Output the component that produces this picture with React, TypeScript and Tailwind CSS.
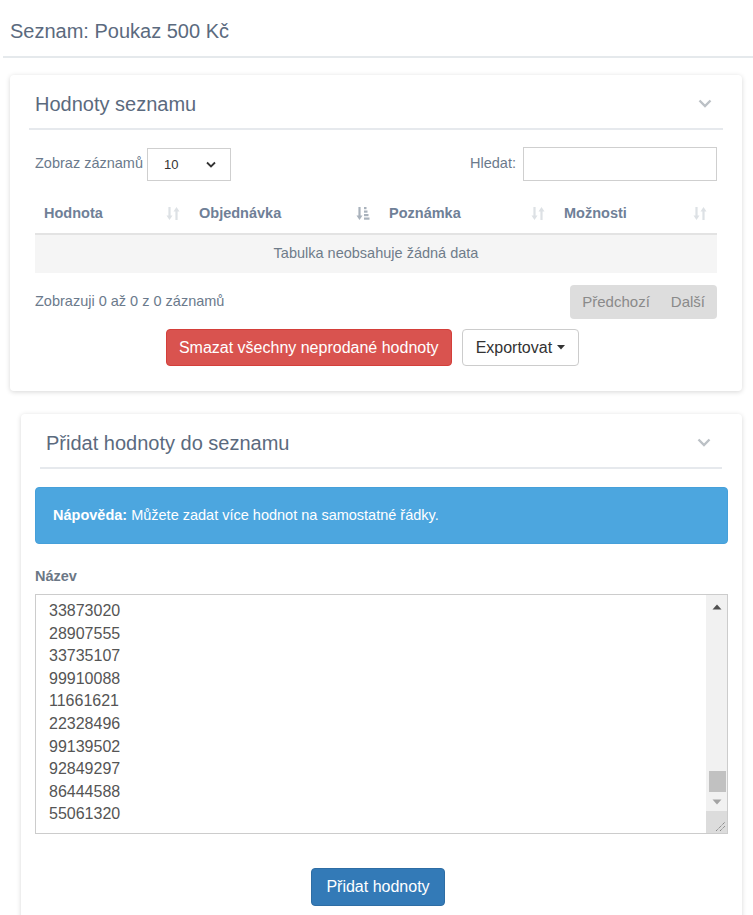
import React from "react";

const values = [
  "33873020",
  "28907555",
  "33735107",
  "99910088",
  "11661621",
  "22328496",
  "99139502",
  "92849297",
  "86444588",
  "55061320",
];

function Chevron() {
  return (
    <svg width="14" height="9" viewBox="0 0 14 9" className="mr-[11px]">
      <polyline points="1.5,1.5 7,7 12.5,1.5" fill="none" stroke="#bcc1c6" strokeWidth="2.4" />
    </svg>
  );
}

function SortIcon({ active = false }: { active?: boolean }) {
  const c = active ? "#a9b2bc" : "#dde1e5";
  return (
    <svg width="14" height="15" viewBox="0 0 14 15">
      <line x1="3.5" y1="1" x2="3.5" y2="12" stroke={c} strokeWidth="2.2" />
      <polygon points="0.5,9.5 6.5,9.5 3.5,14" fill={c} />
      {active ? (
        <>
          <rect x="8" y="1" width="2.5" height="2.2" fill={c} />
          <rect x="8" y="4.5" width="3.5" height="2.2" fill={c} />
          <rect x="8" y="8" width="4.5" height="2.2" fill={c} />
          <rect x="8" y="11.5" width="5.5" height="2.2" fill={c} />
        </>
      ) : (
        <>
          <line x1="10.5" y1="14" x2="10.5" y2="3" stroke={c} strokeWidth="2.2" />
          <polygon points="7.5,5.5 13.5,5.5 10.5,1" fill={c} />
        </>
      )}
    </svg>
  );
}

function CardHeader({ title }: { title: string }) {
  return (
    <div className="flex h-[55px] items-center justify-between border-b-2 border-[#e6e9ed] pt-[4px] pl-[6px]">
      <h2 className="text-[20px] leading-[28px] text-[#5b6a7e]">{title}</h2>
      <Chevron />
    </div>
  );
}

const columns = [
  { name: "Hodnota", w: "w-[155px]", active: false },
  { name: "Objednávka", w: "w-[190px]", active: true },
  { name: "Poznámka", w: "w-[175px]", active: false },
  { name: "Možnosti", w: "w-[162px]", active: false },
];

export default function App() {
  return (
    <div className="min-h-[915px] bg-white font-['Liberation_Sans',Arial,sans-serif] text-[14.5px] text-[#6b7a8c]">
      <div className="ml-[3px] flex h-[58px] items-center border-b-2 border-[#e5e9ec] pl-[7px] pt-[6px]">
        <h1 className="text-[20px] leading-[28px] text-[#5b6a7e]">Seznam: Poukaz 500 Kč</h1>
      </div>

      {/* Hodnoty seznamu */}
      <div className="ml-[10px] mt-[17px] w-[732px] rounded-[4px] bg-white pb-[25px] shadow-[0_1px_5px_rgba(0,0,0,0.16)]">
        <div className="px-[19px]">
          <CardHeader title="Hodnoty seznamu" />
        </div>
        <div className="px-[25px]">
          <div className="mt-[16px] flex items-center justify-between">
            <div className="flex items-center">
              <span>Zobraz záznamů</span>
              <div className="ml-[4px] mt-[2px] flex h-[33px] w-[84px] items-center justify-between border border-[#cfcfcf] pl-[16px] pr-[14px] text-[13px] text-[#333]">
                <span>10</span>
                <svg width="10" height="7" viewBox="0 0 10 7">
                  <polyline points="1,1.5 5,5.5 9,1.5" fill="none" stroke="#333" strokeWidth="1.8" />
                </svg>
              </div>
            </div>
            <div className="flex items-center">
              <span>Hledat:</span>
              <div className="ml-[7px] h-[34px] w-[194px] border border-[#cfcfcf]" />
            </div>
          </div>

          <div className="mt-[14px]">
            <div className="flex h-[40px] items-start border-b-2 border-[#e3e3e3] pt-[8px]">
              {columns.map((c) => (
                <div key={c.name} className={`${c.w} flex items-center justify-between pl-[9px] pr-[10px]`}>
                  <span className="font-bold text-[#6f8097]">{c.name}</span>
                  <SortIcon active={c.active} />
                </div>
              ))}
            </div>
            <div className="flex h-[38px] items-center justify-center bg-[#f5f5f5] text-[#6f7c8a]">
              Tabulka neobsahuje žádná data
            </div>
          </div>

          <div className="mt-[12px] flex items-start justify-between">
            <span className="mt-[6px]">Zobrazuji 0 až 0 z 0 záznamů</span>
            <div className="flex h-[34px] items-center rounded-[4px] bg-[#dddddd] text-[15px] text-[#8a8a8a]">
              <span className="pl-[12px] pr-[10px]">Předchozí</span>
              <span className="pl-[11px] pr-[12px]">Další</span>
            </div>
          </div>

          <div className="mt-[10px] flex justify-center gap-[10px] pr-[7px] text-[16px]">
            <button className="h-[37px] rounded-[4px] border border-[#d43f3a] bg-[#d9534f] px-[12px] text-white">
              Smazat všechny neprodané hodnoty
            </button>
            <button className="flex h-[37px] items-center gap-[5px] rounded-[4px] border border-[#cccccc] bg-white px-[13px] text-[#333]">
              Exportovat
              <svg width="8" height="5" viewBox="0 0 8 5">
                <polygon points="0,0 8,0 4,4.5" fill="#333" />
              </svg>
            </button>
          </div>
        </div>
      </div>

      {/* Přidat hodnoty */}
      <div className="ml-[21px] mt-[23px] w-[721px] rounded-t-[4px] bg-white pb-[24px] shadow-[0_1px_5px_rgba(0,0,0,0.16)]">
        <div className="pl-[19px] pr-[20px]">
          <CardHeader title="Přidat hodnoty do seznamu" />
        </div>
        <div className="px-[14px]">
          <div className="mt-[18px] flex h-[57px] items-center rounded-[4px] border border-[#46a0da] bg-[#4ca6df] pl-[17px] text-white">
            <span className="font-bold">Nápověda:</span>
            <span className="ml-[4px]">Můžete zadat více hodnot na samostatné řádky.</span>
          </div>

          <div className="mt-[22px] font-bold leading-[20px] text-[#6b7785]">Název</div>

          <div className="mt-[8px] flex h-[240px] border border-[#cccccc] bg-white">
            <div className="flex-1 overflow-hidden pl-[13px] pt-[5px] text-[16px] leading-[22.6px] text-[#555]">
              {values.map((v) => (
                <div key={v}>{v}</div>
              ))}
            </div>
            <div className="flex w-[21px] flex-col">
              <div className="flex flex-1 flex-col items-center bg-[#f1f1f1] pl-[1px]">
                <svg width="10" height="6" viewBox="0 0 10 6" className="mt-[9px]">
                  <polygon points="0.5,5.5 9.5,5.5 5,0.5" fill="#505050" />
                </svg>
                <div className="flex-1" />
                <div className="h-[21px] w-[17px] bg-[#c1c1c1]" />
                <svg width="10" height="6" viewBox="0 0 10 6" className="mb-[6px] mt-[7px]">
                  <polygon points="0.5,0.5 9.5,0.5 5,5.5" fill="#a3a3a3" />
                </svg>
              </div>
              <div className="flex h-[22px] items-end justify-end bg-[#dcdcdc] pb-[1px] pr-[1px]">
                <svg width="12" height="12" viewBox="0 0 12 12">
                  <line x1="2" y1="11" x2="11" y2="2" stroke="#6e6e6e" strokeWidth="0.9" strokeDasharray="1.2 0.8" />
                  <line x1="6" y1="11" x2="11" y2="6" stroke="#6e6e6e" strokeWidth="0.9" strokeDasharray="1.2 0.8" />
                </svg>
              </div>
            </div>
          </div>

          <div className="mt-[34px] flex justify-center pr-[7px]">
            <button className="h-[38px] rounded-[4px] border border-[#2e6da4] bg-[#337ab7] px-[14px] text-[16px] text-white">
              Přidat hodnoty
            </button>
          </div>
        </div>
      </div>
    </div>
  );
}
